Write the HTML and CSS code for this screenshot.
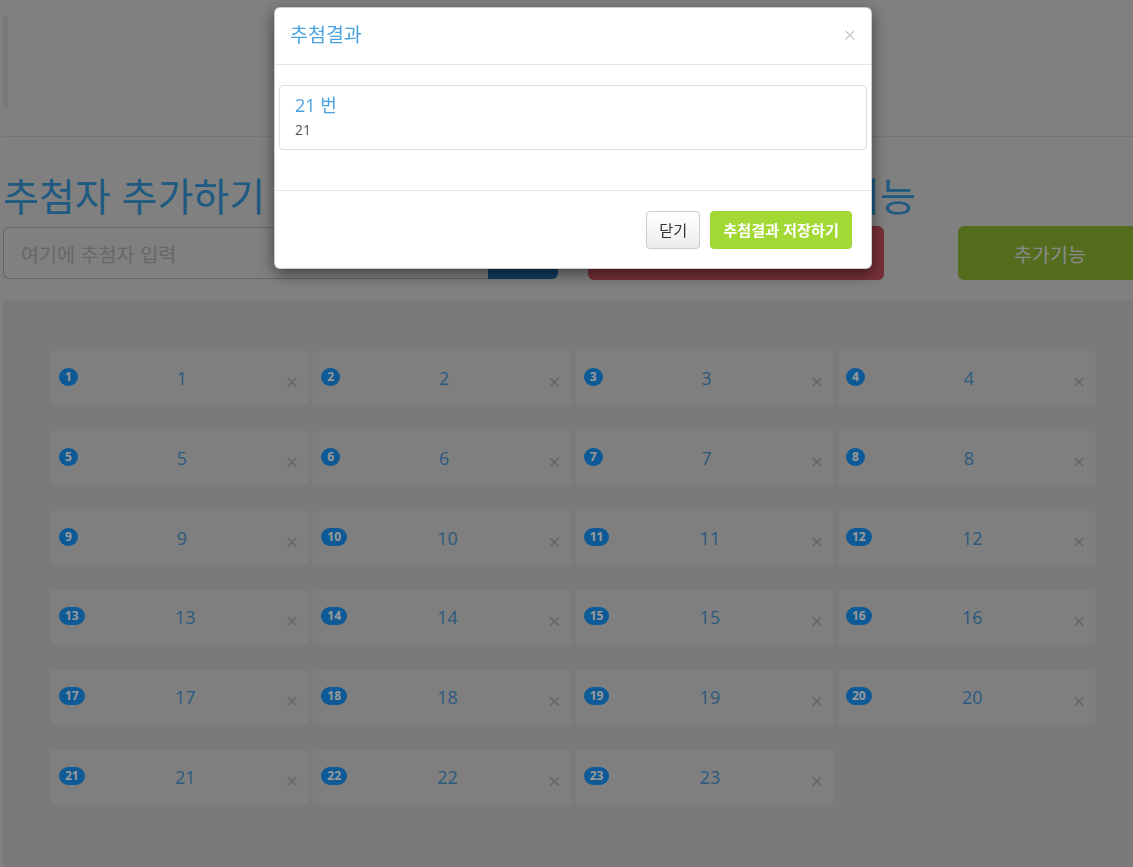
FILE: index.html
```html
<!DOCTYPE html>
<html lang="ko">
<head>
<meta charset="utf-8">
<title>추첨</title>
<link rel="stylesheet" href="styles.css">
</head>
<body>
<div class="page">
  <blockquote class="quote"></blockquote>
  <hr class="divider">
  <div class="heading-row">
    <h1 class="title title-left">추첨자 추가하기</h1>
    <h1 class="title">추첨하기 및 추가기능</h1>
  </div>
  <div class="controls">
    <div class="input-group">
      <input class="name-input" type="text" placeholder="여기에 추첨자 입력">
      <button class="btn-add" aria-label="추가"></button>
    </div>
    <button class="btn-draw" aria-label="추첨하기"></button>
    <button class="btn-extra">추가기능</button>
  </div>
  <div class="well">
    <div class="grid">
      <div class="card"><span class="badge">1</span><span class="num">1</span><span class="x">×</span></div>
      <div class="card"><span class="badge">2</span><span class="num">2</span><span class="x">×</span></div>
      <div class="card"><span class="badge">3</span><span class="num">3</span><span class="x">×</span></div>
      <div class="card"><span class="badge">4</span><span class="num">4</span><span class="x">×</span></div>
      <div class="card"><span class="badge">5</span><span class="num">5</span><span class="x">×</span></div>
      <div class="card"><span class="badge">6</span><span class="num">6</span><span class="x">×</span></div>
      <div class="card"><span class="badge">7</span><span class="num">7</span><span class="x">×</span></div>
      <div class="card"><span class="badge">8</span><span class="num">8</span><span class="x">×</span></div>
      <div class="card"><span class="badge">9</span><span class="num">9</span><span class="x">×</span></div>
      <div class="card"><span class="badge">10</span><span class="num">10</span><span class="x">×</span></div>
      <div class="card"><span class="badge">11</span><span class="num">11</span><span class="x">×</span></div>
      <div class="card"><span class="badge">12</span><span class="num">12</span><span class="x">×</span></div>
      <div class="card"><span class="badge">13</span><span class="num">13</span><span class="x">×</span></div>
      <div class="card"><span class="badge">14</span><span class="num">14</span><span class="x">×</span></div>
      <div class="card"><span class="badge">15</span><span class="num">15</span><span class="x">×</span></div>
      <div class="card"><span class="badge">16</span><span class="num">16</span><span class="x">×</span></div>
      <div class="card"><span class="badge">17</span><span class="num">17</span><span class="x">×</span></div>
      <div class="card"><span class="badge">18</span><span class="num">18</span><span class="x">×</span></div>
      <div class="card"><span class="badge">19</span><span class="num">19</span><span class="x">×</span></div>
      <div class="card"><span class="badge">20</span><span class="num">20</span><span class="x">×</span></div>
      <div class="card"><span class="badge">21</span><span class="num">21</span><span class="x">×</span></div>
      <div class="card"><span class="badge">22</span><span class="num">22</span><span class="x">×</span></div>
      <div class="card"><span class="badge">23</span><span class="num">23</span><span class="x">×</span></div>
    </div>
  </div>
</div>

<div class="backdrop"></div>

<div class="modal">
  <div class="modal-header">
    <h4 class="modal-title">추첨결과</h4>
    <span class="modal-close">×</span>
  </div>
  <div class="modal-body">
    <div class="result">
      <h4 class="result-head">21 번</h4>
      <p class="result-text">21</p>
    </div>
  </div>
  <div class="modal-footer">
    <button class="btn btn-default">닫기</button>
    <button class="btn btn-save">추첨결과 저장하기</button>
  </div>
</div>
</body>
</html>
```

FILE: styles.css
```css
html, body {
  margin: 0;
  overflow: hidden;
}

body {
  width: 1133px;
  height: 867px;
  background: #d5d5d5;
  font-family: "Open Sans", "Noto Sans CJK KR", sans-serif;
  color: #333;
}

.page {
  width: 1150px;
  padding: 17px 0 0 3px;
}

.quote {
  margin: 0;
  height: 90px;
  border-left: 5px solid #c9c9c9;
}

.divider {
  margin: 29px 0 0;
  height: 0;
  border: 0;
  border-top: 1px solid #c4c4c4;
}

.heading-row {
  display: flex;
  margin-top: 41px;
}

.title {
  margin: 0;
  font-family: "Noto Sans CJK KR", sans-serif;
  font-size: 39px;
  line-height: 32px;
  font-weight: 400;
  color: #3496d5;
  white-space: nowrap;
}

.title-left {
  width: 568px;
  flex-shrink: 0;
}

.controls {
  display: flex;
  align-items: center;
  height: 54px;
  margin-top: 16px;
}

.input-group {
  display: flex;
  width: 555px;
  height: 52px;
  flex-shrink: 0;
}

.name-input {
  width: 485px;
  box-sizing: border-box;
  border: 1px solid #aaaaaa;
  border-right: 0;
  border-radius: 6px 0 0 6px;
  background: #d5d5d5;
  padding: 0 17px;
  font-family: "Noto Sans CJK KR", sans-serif;
  font-size: 19.6px;
  outline: none;
}

.name-input::placeholder {
  color: #acacac;
}

.btn-add {
  width: 70px;
  border: 0;
  border-radius: 0 6px 6px 0;
  background: #2167a2;
}

.btn-draw {
  flex-shrink: 0;
  margin-left: 30px;
  width: 296px;
  height: 54px;
  border: 0;
  border-radius: 6px;
  background: #c5505d;
}

.btn-extra {
  flex-shrink: 0;
  margin-left: 74px;
  width: 184px;
  height: 54px;
  border: 0;
  border-radius: 6px;
  background: #8ab432;
  color: #e6e6e6;
  font-family: "Noto Sans CJK KR", sans-serif;
  font-size: 19.5px;
}

.well {
  margin-top: 20px;
  background: #cbcbcb;
  border-radius: 4px;
  padding: 50px 0 80px 47px;
}

.grid {
  display: grid;
  grid-template-columns: repeat(4, 259.33px);
  column-gap: 3px;
  row-gap: 23.8px;
}

.card {
  height: 56px;
  box-sizing: border-box;
  display: flex;
  align-items: center;
  padding: 0 10px 0 8px;
  background: #d4d4d4;
  border: 1px solid #cdcdcd;
  border-radius: 3px;
}

.badge {
  display: inline-block;
  padding: 3px 6px;
  border-radius: 10px;
  background: #1796fa;
  color: #fff;
  font-size: 12px;
  line-height: 12px;
  font-weight: 700;
  margin-top: -2px;
}

.num {
  flex: 1;
  text-align: center;
  font-size: 18px;
  color: #4996d5;
}

.x {
  font-size: 22px;
  line-height: 1;
  font-weight: 400;
  color: #ababab;
  margin-top: 6px;
}

.backdrop {
  position: fixed;
  inset: 0;
  background: rgba(0, 0, 0, 0.4);
}

.modal {
  position: fixed;
  top: 7px;
  left: 274px;
  width: 598px;
  box-sizing: border-box;
  background: #fff;
  border: 1px solid rgba(0, 0, 0, 0.2);
  border-radius: 6px;
  box-shadow: 0 5px 15px rgba(0, 0, 0, 0.5);
}

.modal-header {
  display: flex;
  justify-content: space-between;
  align-items: center;
  padding: 13.5px 15px 16.5px;
  border-bottom: 1px solid #e5e5e5;
}

.modal-title {
  margin: 0;
  font-size: 19.5px;
  line-height: 25.7px;
  font-weight: 400;
  color: #4aa3df;
}

.modal-close {
  font-size: 22px;
  line-height: 1;
  font-weight: 400;
  color: #000;
  opacity: 0.2;
}

.modal-body {
  padding: 20px 4px;
}

.result {
  border: 1px solid #ddd;
  border-radius: 4px;
  padding: 10px 15px;
  margin-bottom: 20px;
}

.result-head {
  margin: 0 0 5px;
  font-size: 18px;
  line-height: 19.8px;
  font-weight: 400;
  color: #4aa3df;
}

.result-text {
  margin: 0;
  font-size: 14px;
  line-height: 18px;
  color: #5a534c;
}

.modal-footer {
  display: flex;
  justify-content: flex-end;
  gap: 10px;
  padding: 20px 19px 19px;
  border-top: 1px solid #e5e5e5;
}

.btn {
  height: 38px;
  box-sizing: border-box;
  border-radius: 4px;
  font-family: "Open Sans", "Noto Sans CJK KR", sans-serif;
  font-size: 15.2px;
  line-height: 36px;
  cursor: pointer;
}

.btn-default {
  padding: 0 12px;
  background: linear-gradient(#ffffff, #ececec);
  border: 1px solid #cccccc;
  color: #333;
}

.btn-save {
  padding: 0 12px;
  background: #a3d935;
  border: 1px solid #9fd431;
  color: #fff;
  font-weight: 700;
}
```
